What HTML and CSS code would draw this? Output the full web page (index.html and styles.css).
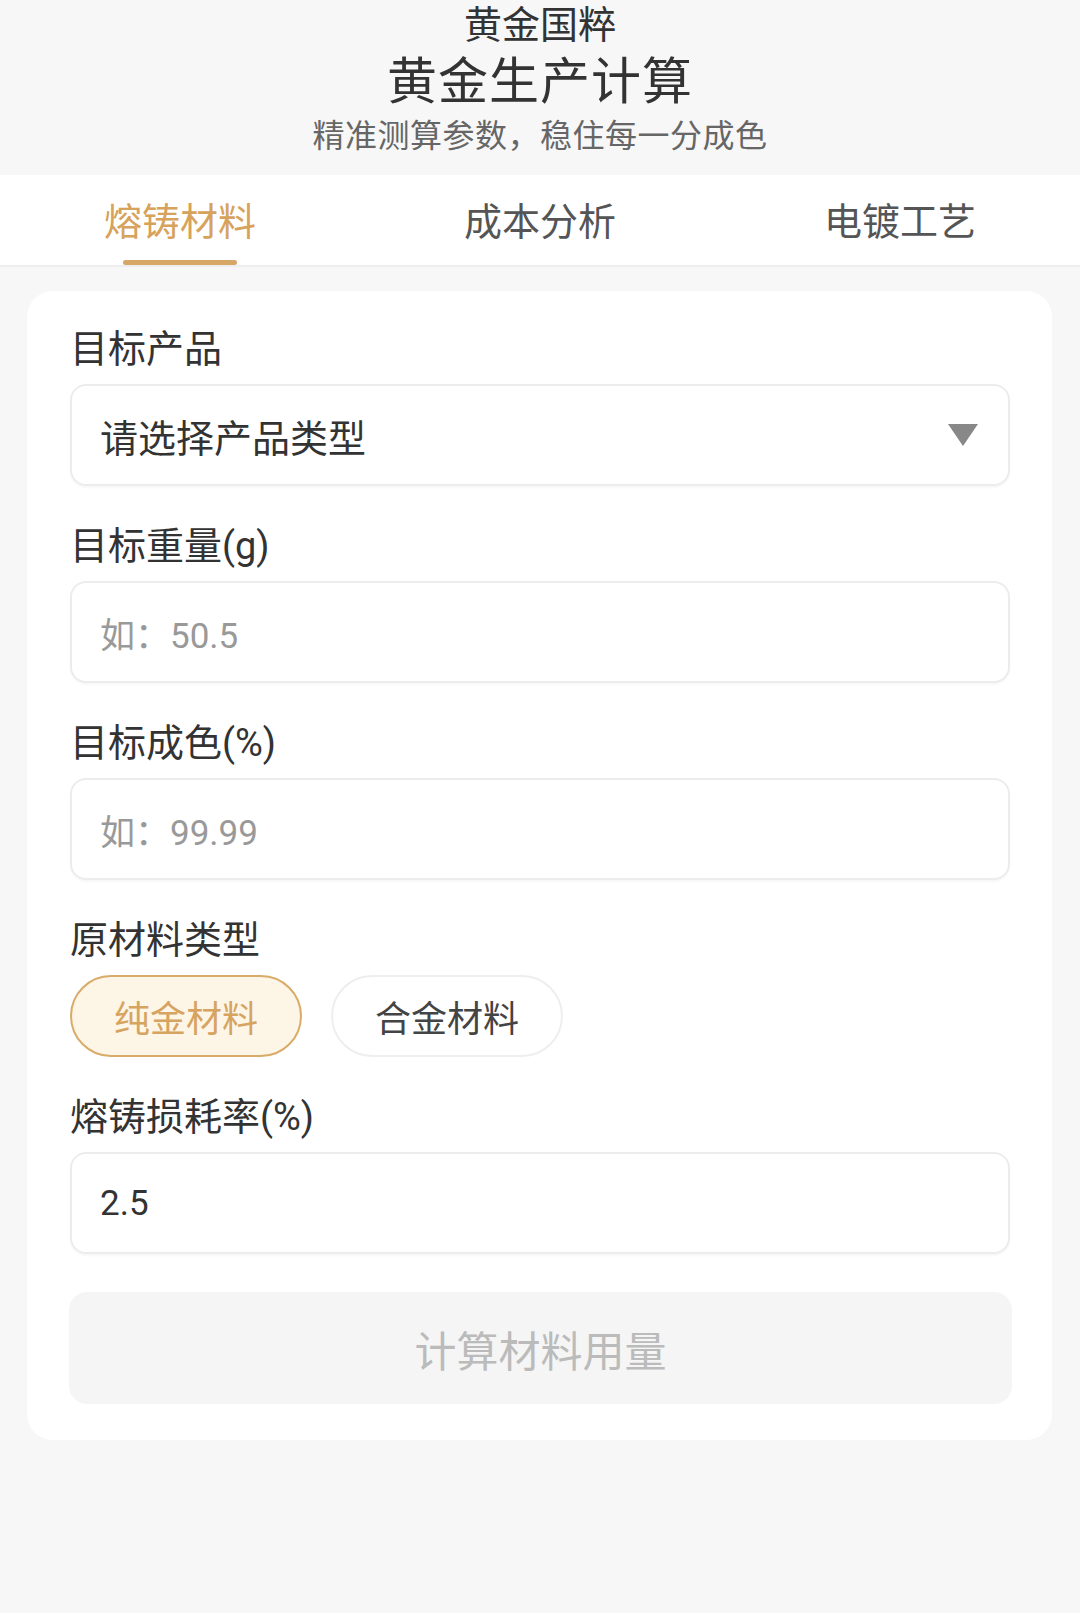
FILE: index.html
```html
<!DOCTYPE html>
<html lang="zh-CN">
<head>
<meta charset="utf-8">
<title>黄金生产计算</title>
<link rel="stylesheet" href="styles.css">
</head>
<body>
<header class="header">
  <div class="brand">黄金国粹</div>
  <h1 class="title">黄金生产计算</h1>
  <p class="subtitle">精准测算参数，稳住每一分成色</p>
</header>
<nav class="tabs">
  <div class="tab active">熔铸材料</div>
  <div class="tab">成本分析</div>
  <div class="tab">电镀工艺</div>
</nav>
<main class="card">
  <div class="field">
    <div class="label">目标产品</div>
    <div class="box select">
      <span class="value">请选择产品类型</span>
      <span class="caret"></span>
    </div>
  </div>
  <div class="field">
    <div class="label">目标重量(g)</div>
    <div class="box"><span class="placeholder">如：50.5</span></div>
  </div>
  <div class="field">
    <div class="label">目标成色(%)</div>
    <div class="box"><span class="placeholder">如：99.99</span></div>
  </div>
  <div class="field field-pills">
    <div class="label">原材料类型</div>
    <div class="pills">
      <div class="pill selected">纯金材料</div>
      <div class="pill">合金材料</div>
    </div>
  </div>
  <div class="field field-last">
    <div class="label">熔铸损耗率(%)</div>
    <div class="box"><span class="value">2.5</span></div>
  </div>
  <div class="button">计算材料用量</div>
</main>
</body>
</html>
```
FILE: styles.css
```css
* { box-sizing: border-box; }
html, body { margin: 0; padding: 0; }
body {
  background: #f7f7f7;
  font-family: Roboto, "Noto Sans CJK SC", "Noto Sans", sans-serif;
  color: #333;
  width: 1080px;
  min-height: 1613px;
}
.header {
  text-align: center;
  padding: 2px 0 19px;
  background: #f7f7f7;
}
.brand {
  font-size: 38px;
  line-height: 46px;
  color: #333;
}
.title {
  margin: 5px 0 0;
  font-size: 50px;
  line-height: 58px;
  font-weight: 400;
  color: #333;
  letter-spacing: 1px;
}
.subtitle {
  margin: 5px 0 0;
  font-size: 32px;
  line-height: 40px;
  color: #666;
  letter-spacing: 0.5px;
}
.tabs {
  display: flex;
  background: #fff;
  height: 92px;
  border-bottom: 2px solid #eeeeee;
}
.tab {
  flex: 1;
  position: relative;
  text-align: center;
  font-size: 38px;
  line-height: 94px;
  height: 90px;
  color: #555;
}
.tab.active { color: #d6a25c; }
.tab.active::after {
  content: "";
  position: absolute;
  left: 123px;
  width: 114px;
  bottom: 0;
  height: 5px;
  border-radius: 3px;
  background: #d6a766;
}
.card {
  margin: 24px 28px 0 27px;
  background: #fff;
  border-radius: 26px;
  padding: 36px 42px 36px 43px;
}
.field { margin-bottom: 38px; }
.field-pills { margin-bottom: 38px; }
.field-last { margin-bottom: 38px; }
.label {
  font-size: 38px;
  line-height: 44px;
  color: #333;
  margin-bottom: 13px;
}
.box {
  height: 102px;
  border: 2px solid #ececec;
  border-radius: 16px;
  display: flex;
  align-items: center;
  padding: 0 28px;
  box-shadow: 0 2px 2px rgba(0,0,0,0.03);
  font-size: 35px;
}
.select { justify-content: space-between; }
.select .value { font-size: 38px; color: #333; }
.value { color: #333; }
.placeholder { color: #999; }
.caret {
  width: 0;
  height: 0;
  border-left: 15px solid transparent;
  border-right: 15px solid transparent;
  border-top: 22px solid #888;
  margin-right: 2px;
}
.pills {
  display: flex;
  gap: 29px;
}
.pill {
  width: 232px;
  height: 82px;
  border-radius: 41px;
  border: 2px solid #eeeeee;
  display: flex;
  align-items: center;
  justify-content: center;
  font-size: 36px;
  color: #444;
  background: #fff;
}
.pill.selected {
  background: #fdf5e6;
  border-color: #d9ab68;
  color: #d6a460;
}
.button {
  height: 112px;
  border-radius: 18px;
  background: #f5f5f5;
  display: flex;
  align-items: center;
  justify-content: center;
  font-size: 42px;
  color: #bbbbbb;
  margin-left: -1px;
  margin-right: -2px;
}
```
